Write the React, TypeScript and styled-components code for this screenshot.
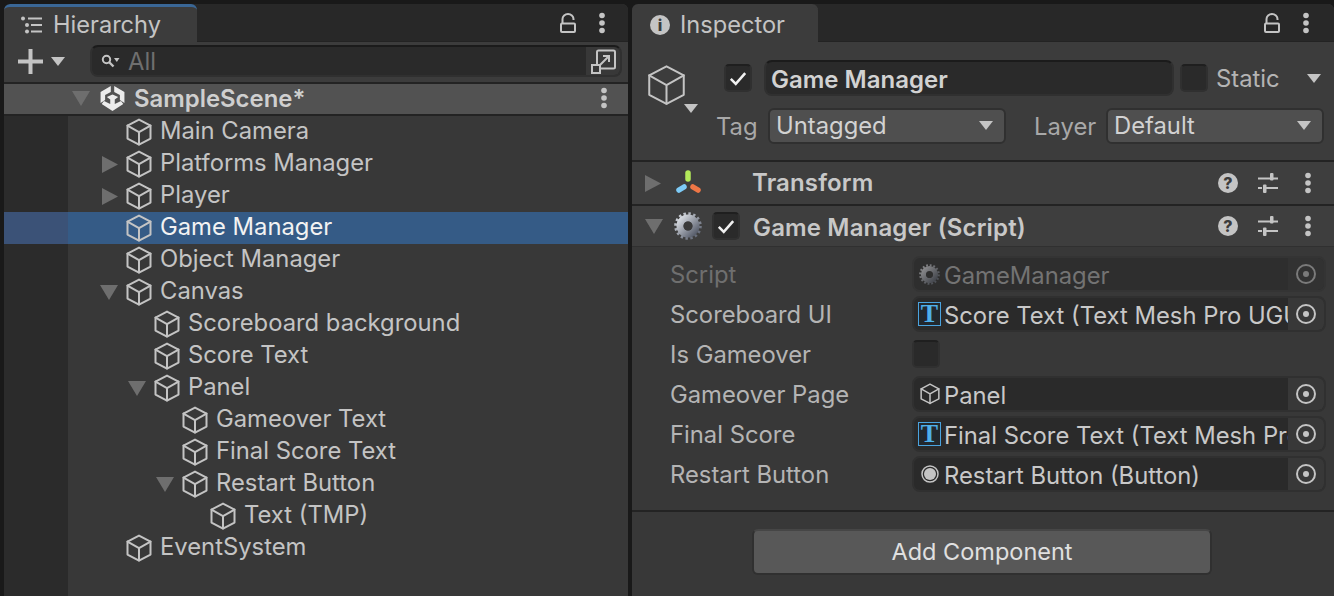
import styled, { createGlobalStyle } from "styled-components";

const GlobalStyle = createGlobalStyle`
  html, body {
    margin: 0;
    padding: 0;
    background: #191919;
    overflow: hidden;
  }
  * {
    box-sizing: border-box;
  }
`;

const Page = styled.div`
  width: 1334px;
  height: 596px;
  padding: 4px 0 0 4px;
  display: flex;
  gap: 4px;
  overflow: hidden;
  font-family: Inter, "Liberation Sans", sans-serif;
  font-size: 23.8px;
  color: #c4c4c4;
`;

const Panel = styled.section<{ $width: number }>`
  width: ${(p) => p.$width}px;
  flex: none;
  height: 592px;
  display: flex;
  flex-direction: column;
  background: #383838;
  border-radius: 6px 6px 0 0;
  overflow: hidden;
`;

const TabBar = styled.div`
  height: 38px;
  flex: none;
  display: flex;
  align-items: flex-start;
  justify-content: space-between;
  background: #282828;
  border-bottom: 1px solid #232323;
`;

const Tab = styled.div<{ $width: number; $pad: number; $gap: number; $accent?: boolean }>`
  width: ${(p) => p.$width}px;
  height: 38px;
  display: flex;
  align-items: center;
  gap: ${(p) => p.$gap}px;
  padding-left: ${(p) => p.$pad}px;
  background: #3c3c3c;
  border-top: 3px solid ${(p) => (p.$accent ? "#3a6796" : "#3c3c3c")};
  border-radius: 6px 6px 0 0;
  color: #c4c4c4;
  font-size: 23.6px;
`;

const TabTools = styled.div<{ $gap: number; $right: number }>`
  height: 37px;
  display: flex;
  align-items: center;
  gap: ${(p) => p.$gap}px;
  padding-right: ${(p) => p.$right}px;
`;

const Toolbar = styled.div`
  height: 42px;
  flex: none;
  display: flex;
  align-items: center;
  padding: 0 6px 2px 14px;
  background: #3c3c3c;
  border-bottom: 2px solid #232323;
`;

const AddGroup = styled.div`
  width: 72px;
  flex: none;
  display: flex;
  align-items: center;
  gap: 8px;
`;

const SearchBox = styled.div`
  flex: 1;
  height: 32px;
  display: flex;
  align-items: center;
  gap: 6px;
  padding-left: 9px;
  background: #2a2a2a;
  border: 2px solid #303030;
  border-top-color: #1b1b1b;
  border-radius: 8px;
  color: #6f6f6f;
`;

const SearchField = styled.div`
  flex: 1;
  display: flex;
  align-items: center;
  gap: 8px;
  height: 100%;
`;

const SearchButton = styled.div`
  width: 36px;
  height: 100%;
  flex: none;
  display: flex;
  align-items: center;
  justify-content: center;
  background: #383838;
  border-left: 2px solid #2a2a2a;
  border-radius: 0 6px 6px 0;
`;

const SceneHeader = styled.div`
  height: 32px;
  flex: none;
  display: flex;
  align-items: center;
  padding: 0 20px 2px 68px;
  background: #525252;
  border-bottom: 2px solid #232323;
  font-weight: 600;
  font-size: 23.9px;
  color: #cfcfcf;
`;

const SceneArrow = styled.div`
  width: 28px;
  flex: none;
`;

const SceneName = styled.span`
  flex: 1;
  margin-left: 9px;
`;

const Tree = styled.div`
  flex: 1;
  background: linear-gradient(to right, #2b2b2b 64px, #383838 64px);
`;

const TreeRow = styled.div<{ $depth: number; $selected?: boolean }>`
  height: 32px;
  display: flex;
  align-items: center;
  padding-left: ${(p) => 92 + p.$depth * 28}px;
  background: ${(p) =>
    p.$selected ? "linear-gradient(to right, #3b5277 64px, #355b86 64px)" : "transparent"};
  color: ${(p) => (p.$selected ? "#f2f2f2" : "#c4c4c4")};
`;

const ArrowSlot = styled.div<{ $dir?: "down" | "right" }>`
  width: 30px;
  flex: none;
  display: flex;
  align-items: center;
  padding-left: ${(p) => (p.$dir === "down" ? 4 : 6)}px;
`;

const RowLabel = styled.span`
  margin: 0 0 4px 8px;
  white-space: nowrap;
`;

const InspectorHeader = styled.div`
  height: 120px;
  flex: none;
  display: flex;
  background: #3c3c3c;
  border-bottom: 2px solid #232323;
`;

const PrefabIcon = styled.div`
  width: 92px;
  flex: none;
  position: relative;
  padding: 22px 0 0 15px;
`;

const PrefabCaret = styled.div`
  position: absolute;
  left: 52px;
  top: 62px;
`;

const HeaderBody = styled.div`
  flex: 1;
  display: flex;
  flex-direction: column;
`;

const NameRow = styled.div`
  display: flex;
  align-items: center;
  height: 36px;
  margin-top: 18px;
`;

const CheckBox = styled.div<{ $left?: number }>`
  width: 28px;
  height: 28px;
  flex: none;
  display: flex;
  align-items: center;
  justify-content: center;
  margin-left: ${(p) => p.$left ?? 0}px;
  background: #2a2a2a;
  border: 2px solid #303030;
  border-top-color: #1f1f1f;
  border-radius: 5px;
`;

const NameField = styled.div`
  width: 410px;
  height: 36px;
  flex: none;
  display: flex;
  align-items: center;
  margin: 0 6px 0 12px;
  padding: 2px 0 0 5px;
  background: #2a2a2a;
  border: 2px solid #303030;
  border-top-color: #1b1b1b;
  border-radius: 8px;
  font-weight: 600;
  font-size: 24px;
  color: #d2d2d2;
`;

const StaticLabel = styled.span`
  width: 91px;
  margin-left: 8px;
  color: #b4b4b4;
`;

const TagRow = styled.div`
  display: flex;
  align-items: center;
  height: 36px;
  margin: 12px 0 0 -8px;
`;

const MutedLabel = styled.span<{ $width: number; $left?: number }>`
  width: ${(p) => p.$width}px;
  flex: none;
  margin-left: ${(p) => p.$left ?? 0}px;
  color: #a8a8a8;
`;

const Dropdown = styled.div<{ $width: number }>`
  width: ${(p) => p.$width}px;
  height: 36px;
  flex: none;
  display: flex;
  align-items: center;
  justify-content: space-between;
  padding: 0 11px 2px 6px;
  background: #4f4f4f;
  border: 2px solid #303030;
  border-radius: 6px;
  color: #d2d2d2;
`;

const ComponentHeader = styled.div<{ $height: number; $line: number; $color: string }>`
  height: ${(p) => p.$height}px;
  flex: none;
  display: flex;
  align-items: center;
  padding-right: 22px;
  background: #3e3e3e;
  border-bottom: ${(p) => p.$line}px solid ${(p) => p.$color};
  font-weight: 600;
  font-size: 24px;
  letter-spacing: 0.15px;
  color: #c8c8c8;
`;

const HeaderArrow = styled.div`
  width: 42px;
  flex: none;
  display: flex;
  padding-left: 13px;
`;

const HeaderIcon = styled.div`
  width: 28px;
  flex: none;
  display: flex;
  justify-content: center;
`;

const ComponentTitle = styled.span<{ $left: number; $nudge: number }>`
  flex: 1;
  margin-left: ${(p) => p.$left}px;
  margin-top: ${(p) => p.$nudge}px;
  white-space: nowrap;
`;

const HeaderTools = styled.div`
  display: flex;
  align-items: center;
  gap: 20px;
`;

const ToolDots = styled.div`
  margin-left: 6px;
`;

const Fields = styled.div`
  padding: 7px 8px 0 38px;
  height: 265px;
  flex: none;
  border-bottom: 2px solid #232323;
`;

const FieldRow = styled.div`
  height: 40px;
  display: flex;
  align-items: center;
`;

const FieldName = styled.span<{ $disabled?: boolean }>`
  width: 242px;
  flex: none;
  color: ${(p) => (p.$disabled ? "#6f6f6f" : "#b4b4b4")};
`;

const ObjectField = styled.div<{ $disabled?: boolean }>`
  flex: 1;
  min-width: 0;
  height: 36px;
  display: flex;
  align-items: center;
  padding-left: 4px;
  background: ${(p) => (p.$disabled ? "#2e2e2e" : "#2a2a2a")};
  border: 2px solid ${(p) => (p.$disabled ? "#343434" : "#303030")};
  border-radius: 8px;
  overflow: hidden;
  color: ${(p) => (p.$disabled ? "#737373" : "#c8c8c8")};
`;

const FieldIcon = styled.div`
  width: 23px;
  flex: none;
  display: flex;
  justify-content: center;
`;

const FieldText = styled.span`
  flex: 1;
  min-width: 0;
  margin-left: 3px;
  padding-top: 2px;
  overflow: hidden;
  white-space: nowrap;
`;

const TargetButton = styled.div<{ $disabled?: boolean }>`
  width: 36px;
  height: 100%;
  flex: none;
  display: flex;
  align-items: center;
  justify-content: center;
  background: ${(p) => (p.$disabled ? "#323232" : "#383838")};
`;

const TextMeshIcon = styled.div`
  width: 23px;
  height: 24px;
  flex: none;
  display: flex;
  align-items: center;
  justify-content: center;
  border: 1px solid #4aa3df;
  background: #22282d;
  color: #4fb0ea;
  font-family: "Liberation Serif", serif;
  font-weight: 700;
  font-size: 26px;
  line-height: 1;
`;

const Footer = styled.div`
  flex: 1;
  display: flex;
  justify-content: center;
  padding: 17px 1px 0 0;
`;

const AddButton = styled.div`
  width: 460px;
  height: 46px;
  margin-left: -1px;
  padding-bottom: 2px;
  display: flex;
  align-items: center;
  justify-content: center;
  background: #585858;
  border: 2px solid #303030;
  border-top-color: #464646;
  border-radius: 6px;
  font-size: 23.5px;
  color: #e0e0e0;
`;

const BadgeIcon = styled.div<{ $size: number }>`
  width: ${(p) => p.$size}px;
  height: ${(p) => p.$size}px;
  flex: none;
  display: flex;
  align-items: center;
  justify-content: center;
  border-radius: 50%;
  background: #c4c4c4;
  color: #3c3c3c;
  font-weight: 800;
  font-size: ${(p) => p.$size - 4}px;
  letter-spacing: 0;
  line-height: 1;
`;

const Caret = () => (
  <svg width="14" height="9" viewBox="0 0 14 9" style={{ display: "block", flex: "none" }}>
    <path fill="#c4c4c4" d="M0 0h14L7 9z" />
  </svg>
);

const Arrow = ({ dir }: { dir: "down" | "right" }) =>
  dir === "down" ? (
    <svg width="18" height="15" viewBox="0 0 18 15" style={{ display: "block", flex: "none" }}>
      <path fill="#6e6e6e" d="M0 0h18L9 15z" />
    </svg>
  ) : (
    <svg width="16" height="17" viewBox="0 0 16 17" style={{ display: "block", flex: "none" }}>
      <path fill="#6e6e6e" d="M0 0l16 8.500L0 17z" />
    </svg>
  );

const Cube = ({ size = 26, stroke = 2 }: { size?: number; stroke?: number }) => (
  <svg
    width={size}
    height={size * 1.08}
    viewBox="0 0 26 28"
    fill="none"
    stroke="#c4c4c4"
    strokeWidth={(stroke * 26) / size}
    strokeLinejoin="round"
    strokeLinecap="round"
    style={{ display: "block", flex: "none" }}
  >
    <path d="M13 1.500 24.500 7.500V20.500L13 26.500 1.500 20.500V7.500Z" />
    <path d="M1.500 7.500 13 14 24.500 7.500M13 14V26.500" />
  </svg>
);

const Dots = () => (
  <svg width="8" height="22" viewBox="0 0 8 22" fill="#c4c4c4" style={{ display: "block", flex: "none" }}>
    <circle cx="4" cy="3.500" r="2.800" />
    <circle cx="4" cy="11" r="2.800" />
    <circle cx="4" cy="18.500" r="2.800" />
  </svg>
);

const Lock = () => (
  <svg width="16" height="20" viewBox="0 0 16 20" fill="none" stroke="#c4c4c4" strokeWidth="2" style={{ display: "block" }}>
    <rect x="1" y="10.500" width="14" height="8.500" rx="1" />
    <path d="M2.500 10V6a5.500 5 0 0 1 11 0v1" />
  </svg>
);

const HierarchyIcon = () => (
  <svg width="22" height="18" viewBox="0 0 22 18" fill="#c4c4c4" style={{ display: "block", flex: "none" }}>
    <circle cx="2" cy="2.500" r="2" />
    <circle cx="6" cy="9" r="2" />
    <circle cx="6" cy="15.500" r="2" />
    <rect x="7" y="1.500" width="14" height="2" />
    <rect x="10" y="8" width="11" height="2" />
    <rect x="10" y="14.500" width="11" height="2" />
  </svg>
);

const Plus = () => (
  <svg width="25" height="25" viewBox="0 0 25 25" fill="#c4c4c4" style={{ display: "block" }}>
    <rect x="0" y="10.500" width="25" height="4" />
    <rect x="10.500" y="0" width="4" height="25" />
  </svg>
);

const SearchGlass = () => (
  <svg width="19" height="14" viewBox="0 0 19 14" fill="none" style={{ display: "block", flex: "none" }}>
    <circle cx="5.500" cy="5.500" r="3.700" stroke="#c4c4c4" strokeWidth="2" />
    <path d="M8 8l4.500 4.500" stroke="#c4c4c4" strokeWidth="2.400" />
    <path d="M13 4h5.500l-2.700 4z" fill="#c4c4c4" />
  </svg>
);

const PopOut = () => (
  <svg width="25" height="25" viewBox="0 0 25 25" fill="none" stroke="#c4c4c4" strokeWidth="2" style={{ display: "block" }}>
    <path d="M6 15V3a1.500 1.500 0 0 1 1.500-1.500h15A1.500 1.500 0 0 1 24 3v15a1.500 1.500 0 0 1-1.500 1.500H10" />
    <rect x="1" y="16" width="8" height="8" />
    <path d="M9 16l9-9M12 7h6v6" />
  </svg>
);

const SceneIcon = () => (
  <svg
    width="25"
    height="27"
    viewBox="1.500 0 22 27"
    preserveAspectRatio="none"
    fill="#ececec"
    style={{ display: "block", flex: "none" }}
  >
    <path d="M11 1 2 7V18L6 15V10L11 7Z" />
    <path d="M14 1 23 7V18L19 15V10L14 7Z" />
    <path d="M7.500 12 12.500 9.500 17.500 12 14.500 14.500V19L20 16 22 19 12.500 26 3 19 5 16 10.500 19V14.500Z" />
  </svg>
);

const TransformIcon = () => (
  <svg width="28" height="24" viewBox="0 0 28 24" fill="none" strokeWidth="5.500" strokeLinecap="round" style={{ display: "block", marginBottom: 2 }}>
    <path stroke="#b3ea5a" d="M14 3V9" />
    <path stroke="#7dcbf7" d="M5 20l5-3" />
    <path stroke="#ee7646" d="M19 17l5 3" />
  </svg>
);

const Gear = ({ size = 28, dim }: { size?: number; dim?: boolean }) => {
  const id = dim ? "gearDim" : "gearFull";
  return (
    <svg width={size} height={size} viewBox="0 0 28 28" style={{ display: "block", flex: "none" }}>
      <defs>
        <linearGradient id={id} x1="0" y1="0" x2="1" y2="1">
          <stop offset="0" stopColor={dim ? "#8a8a8c" : "#d8dce2"} />
          <stop offset="1" stopColor={dim ? "#43464d" : "#565c6a"} />
        </linearGradient>
      </defs>
      <circle cx="14" cy="14" r="12.300" fill="none" stroke={`url(#${id})`} strokeWidth="3" strokeDasharray="2.400 2.430" />
      <circle cx="14" cy="14" r="8" fill="none" stroke={`url(#${id})`} strokeWidth="7" />
      <circle cx="14" cy="14" r="4.500" fill={dim ? "#2e2e2e" : "#3a3a3a"} />
    </svg>
  );
};

const Sliders = () => (
  <svg width="20" height="20" viewBox="0 0 20 20" fill="#c4c4c4" style={{ display: "block" }}>
    <rect x="0" y="4.500" width="20" height="2" />
    <rect x="12" y="0" width="3.500" height="7.500" rx="1" />
    <rect x="0" y="14" width="4" height="2" />
    <rect x="7" y="14" width="13" height="2" />
    <rect x="5" y="11.500" width="3.500" height="8.500" rx="1" />
  </svg>
);

const Check = () => (
  <svg width="18" height="15" viewBox="0 0 20 16" fill="none" stroke="#f0f0f0" strokeWidth="2.800" style={{ display: "block" }}>
    <path d="M2 8.500 7.500 14 18 2" />
  </svg>
);

const Target = ({ dim }: { dim?: boolean }) => (
  <svg width="20" height="20" viewBox="0 0 20 20" style={{ display: "block" }}>
    <circle cx="10" cy="10" r="9" fill="none" stroke={dim ? "#7a7a7a" : "#c4c4c4"} strokeWidth="2" />
    <circle cx="10" cy="10" r="3" fill={dim ? "#7a7a7a" : "#c4c4c4"} />
  </svg>
);

const RadioIcon = () => (
  <svg width="18" height="18" viewBox="0 0 18 18" style={{ display: "block" }}>
    <circle cx="9" cy="9" r="8" fill="none" stroke="#c4c4c4" strokeWidth="1.500" />
    <circle cx="9" cy="9" r="6" fill="#c4c4c4" />
  </svg>
);

type Node = { name: string; depth: number; arrow?: "down" | "right"; selected?: boolean };

const nodes: Node[] = [
  { name: "Main Camera", depth: 0 },
  { name: "Platforms Manager", depth: 0, arrow: "right" },
  { name: "Player", depth: 0, arrow: "right" },
  { name: "Game Manager", depth: 0, selected: true },
  { name: "Object Manager", depth: 0 },
  { name: "Canvas", depth: 0, arrow: "down" },
  { name: "Scoreboard background", depth: 1 },
  { name: "Score Text", depth: 1 },
  { name: "Panel", depth: 1, arrow: "down" },
  { name: "Gameover Text", depth: 2 },
  { name: "Final Score Text", depth: 2 },
  { name: "Restart Button", depth: 2, arrow: "down" },
  { name: "Text (TMP)", depth: 3 },
  { name: "EventSystem", depth: 0 },
];

const ComponentTools = () => (
  <HeaderTools>
    <BadgeIcon $size={20}>?</BadgeIcon>
    <Sliders />
    <ToolDots>
      <Dots />
    </ToolDots>
  </HeaderTools>
);

const App = () => (
  <Page>
    <GlobalStyle />
    <Panel $width={624}>
      <TabBar>
        <Tab $width={193} $pad={17} $gap={10} $accent>
          <HierarchyIcon />
          Hierarchy
        </Tab>
        <TabTools $gap={22} $right={22}>
          <Lock />
          <Dots />
        </TabTools>
      </TabBar>
      <Toolbar>
        <AddGroup>
          <Plus />
          <Caret />
        </AddGroup>
        <SearchBox>
          <SearchField>
            <SearchGlass />
            All
          </SearchField>
          <SearchButton>
            <PopOut />
          </SearchButton>
        </SearchBox>
      </Toolbar>
      <SceneHeader>
        <SceneArrow>
          <Arrow dir="down" />
        </SceneArrow>
        <SceneIcon />
        <SceneName>SampleScene*</SceneName>
        <Dots />
      </SceneHeader>
      <Tree>
        {nodes.map((n) => (
          <TreeRow key={n.name} $depth={n.depth} $selected={n.selected}>
            <ArrowSlot $dir={n.arrow}>{n.arrow && <Arrow dir={n.arrow} />}</ArrowSlot>
            <Cube />
            <RowLabel>{n.name}</RowLabel>
          </TreeRow>
        ))}
      </Tree>
    </Panel>
    <Panel $width={702}>
      <TabBar>
        <Tab $width={186} $pad={18} $gap={10}>
          <BadgeIcon $size={20}>i</BadgeIcon>
          Inspector
        </Tab>
        <TabTools $gap={22} $right={24}>
          <Lock />
          <Dots />
        </TabTools>
      </TabBar>
      <InspectorHeader>
        <PrefabIcon>
          <Cube size={39} stroke={2} />
          <PrefabCaret>
            <Caret />
          </PrefabCaret>
        </PrefabIcon>
        <HeaderBody>
          <NameRow>
            <CheckBox>
              <Check />
            </CheckBox>
            <NameField>Game Manager</NameField>
            <CheckBox />
            <StaticLabel>Static</StaticLabel>
            <Caret />
          </NameRow>
          <TagRow>
            <MutedLabel $width={52}>Tag</MutedLabel>
            <Dropdown $width={238}>
              Untagged
              <Caret />
            </Dropdown>
            <MutedLabel $width={72} $left={28}>
              Layer
            </MutedLabel>
            <Dropdown $width={218}>
              Default
              <Caret />
            </Dropdown>
          </TagRow>
        </HeaderBody>
      </InspectorHeader>
      <ComponentHeader $height={44} $line={2} $color="#232323">
        <HeaderArrow>
          <Arrow dir="right" />
        </HeaderArrow>
        <HeaderIcon>
          <TransformIcon />
        </HeaderIcon>
        <ComponentTitle $left={50} $nudge={-2}>
          Transform
        </ComponentTitle>
        <ComponentTools />
      </ComponentHeader>
      <ComponentHeader $height={41} $line={1} $color="#303030">
        <HeaderArrow>
          <Arrow dir="down" />
        </HeaderArrow>
        <HeaderIcon>
          <Gear />
        </HeaderIcon>
        <CheckBox $left={10}>
          <Check />
        </CheckBox>
        <ComponentTitle $left={13} $nudge={2}>
          Game Manager (Script)
        </ComponentTitle>
        <ComponentTools />
      </ComponentHeader>
      <Fields>
        <FieldRow>
          <FieldName $disabled>Script</FieldName>
          <ObjectField $disabled>
            <FieldIcon>
              <Gear size={21} dim />
            </FieldIcon>
            <FieldText>GameManager</FieldText>
            <TargetButton $disabled>
              <Target dim />
            </TargetButton>
          </ObjectField>
        </FieldRow>
        <FieldRow>
          <FieldName>Scoreboard UI</FieldName>
          <ObjectField>
            <TextMeshIcon>T</TextMeshIcon>
            <FieldText>Score Text (Text Mesh Pro UGUI)</FieldText>
            <TargetButton>
              <Target />
            </TargetButton>
          </ObjectField>
        </FieldRow>
        <FieldRow>
          <FieldName>Is Gameover</FieldName>
          <CheckBox />
        </FieldRow>
        <FieldRow>
          <FieldName>Gameover Page</FieldName>
          <ObjectField>
            <FieldIcon>
              <Cube size={20} stroke={1.500} />
            </FieldIcon>
            <FieldText>Panel</FieldText>
            <TargetButton>
              <Target />
            </TargetButton>
          </ObjectField>
        </FieldRow>
        <FieldRow>
          <FieldName>Final Score</FieldName>
          <ObjectField>
            <TextMeshIcon>T</TextMeshIcon>
            <FieldText>Final Score Text (Text Mesh Pro UGUI)</FieldText>
            <TargetButton>
              <Target />
            </TargetButton>
          </ObjectField>
        </FieldRow>
        <FieldRow>
          <FieldName>Restart Button</FieldName>
          <ObjectField>
            <FieldIcon>
              <RadioIcon />
            </FieldIcon>
            <FieldText>Restart Button (Button)</FieldText>
            <TargetButton>
              <Target />
            </TargetButton>
          </ObjectField>
        </FieldRow>
      </Fields>
      <Footer>
        <AddButton>Add Component</AddButton>
      </Footer>
    </Panel>
  </Page>
);

export default App;
